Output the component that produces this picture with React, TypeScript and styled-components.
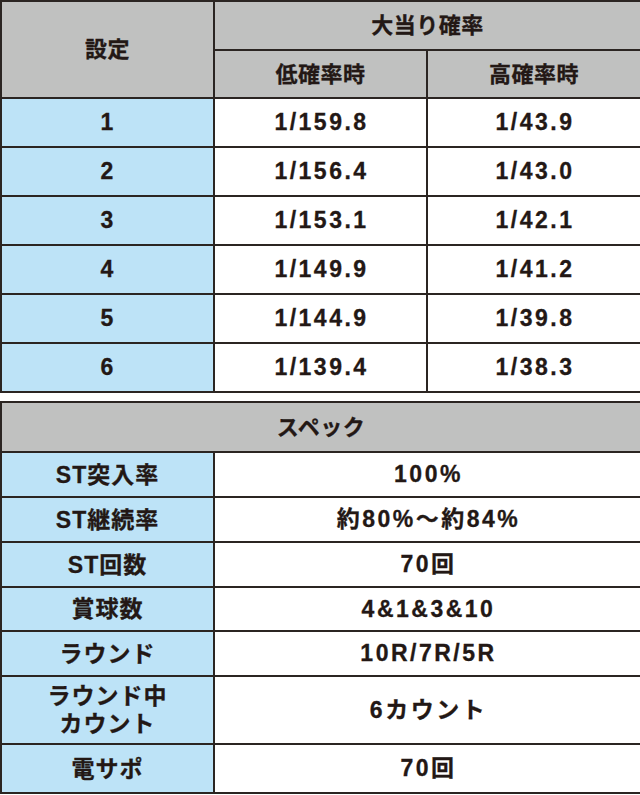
import React from "react";
import styled, { createGlobalStyle } from "styled-components";

const GlobalStyle = createGlobalStyle`
  html, body {
    margin: 0;
    padding: 0;
    background: #fff;
  }
  body {
    font-family: "Liberation Sans", "Noto Sans CJK JP", sans-serif;
    color: #231815;
  }
`;

const rates = [
  { set: "1", low: "1/159.8", high: "1/43.9" },
  { set: "2", low: "1/156.4", high: "1/43.0" },
  { set: "3", low: "1/153.1", high: "1/42.1" },
  { set: "4", low: "1/149.9", high: "1/41.2" },
  { set: "5", low: "1/144.9", high: "1/39.8" },
  { set: "6", low: "1/139.4", high: "1/38.3" },
];

const specs = [
  { label: ["ST突入率"], value: "100%", h: 45 },
  { label: ["ST継続率"], value: "約80%～約84%", h: 45 },
  { label: ["ST回数"], value: "70回", h: 45 },
  { label: ["賞球数"], value: "4&1&3&10", h: 44 },
  { label: ["ラウンド"], value: "10R/7R/5R", h: 45 },
  { label: ["ラウンド中", "カウント"], value: "6カウント", h: 68 },
  { label: ["電サポ"], value: "70回", h: 49 },
];

const Page = styled.div`
  width: 640px;
  display: flex;
  flex-direction: column;
  gap: 8px;
`;

const Table = styled.table`
  width: 640px;
  border-collapse: collapse;
  table-layout: fixed;
  border: 2px solid #2b2522;
`;

const Row = styled.tr<{ $h: number }>`
  height: ${(p) => p.$h}px;
`;

const Cell = styled.td`
  border: 2px solid #2b2522;
  padding: 0;
  text-align: center;
  vertical-align: middle;
  font-weight: 700;
  line-height: 25px;
  -webkit-text-stroke: 0.3px #231815;
`;

const HeadCell = styled(Cell)`
  background: #c0c1c0;
  font-size: 22px;
  letter-spacing: 0.5px;
`;

const LabelCell = styled(Cell)`
  background: #bde3f7;
  font-size: 23px;
  letter-spacing: 1px;
`;

const ValueCell = styled(Cell)`
  background: #fff;
  font-size: 23px;
  letter-spacing: 2.5px;
  text-indent: 2px;
`;

const Line = styled.span`
  display: block;
  line-height: 28px;
`;

export default function App() {
  return (
    <>
      <GlobalStyle />
      <Page>
        <Table>
          <colgroup>
            <col style={{ width: 213 }} />
            <col style={{ width: 213 }} />
            <col style={{ width: 214 }} />
          </colgroup>
          <tbody>
            <Row $h={49}>
              <HeadCell rowSpan={2}>設定</HeadCell>
              <HeadCell colSpan={2}>大当り確率</HeadCell>
            </Row>
            <Row $h={48}>
              <HeadCell>低確率時</HeadCell>
              <HeadCell>高確率時</HeadCell>
            </Row>
            {rates.map((r) => (
              <Row $h={49} key={r.set}>
                <LabelCell>{r.set}</LabelCell>
                <ValueCell>{r.low}</ValueCell>
                <ValueCell>{r.high}</ValueCell>
              </Row>
            ))}
          </tbody>
        </Table>
        <Table>
          <colgroup>
            <col style={{ width: 213 }} />
            <col style={{ width: 427 }} />
          </colgroup>
          <tbody>
            <Row $h={50}>
              <HeadCell colSpan={2}>スペック</HeadCell>
            </Row>
            {specs.map((s) => (
              <Row $h={s.h} key={s.label.join("")}>
                <LabelCell>
                  {s.label.map((l) => (
                    <Line key={l}>{l}</Line>
                  ))}
                </LabelCell>
                <ValueCell>{s.value}</ValueCell>
              </Row>
            ))}
          </tbody>
        </Table>
      </Page>
    </>
  );
}
